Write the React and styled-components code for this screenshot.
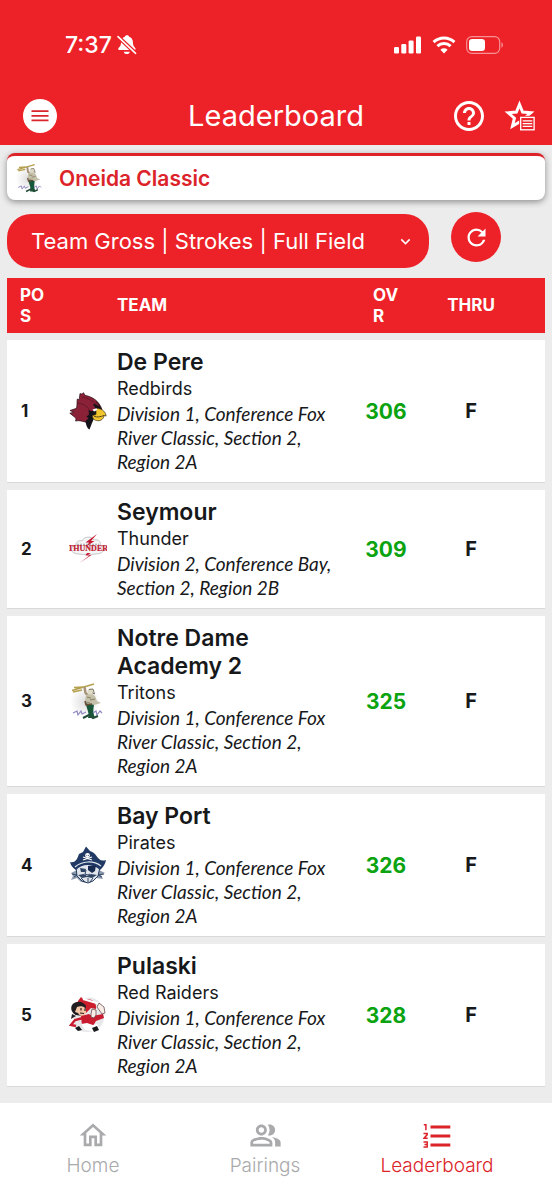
import React from 'react';
import styled, { createGlobalStyle } from 'styled-components';
import {
  MdExpandMore,
  MdHelpOutline,
  MdOutlineHome,
  MdOutlinePeopleAlt,
  MdRefresh,
} from 'react-icons/md';

const GlobalStyle = createGlobalStyle`
  * {
    box-sizing: border-box;
  }

  body {
    margin: 0;
    background: #ececec;
    color: #17181a;
    font-family: Inter, 'Liberation Sans', sans-serif;
  }

  button,
  select {
    font-family: inherit;
    border: 0;
    padding: 0;
    margin: 0;
  }
`;

const Page = styled.div`
  display: flex;
  flex-direction: column;
  min-height: 100vh;
`;

const Header = styled.header`
  background: #ed2228;
  color: #fff;
  padding-bottom: 3px;
`;

const StatusBar = styled.div`
  display: flex;
  align-items: center;
  justify-content: space-between;
  height: 90px;
  padding: 0 48px 0 65px;
`;

const StatusGroup = styled.div`
  display: flex;
  align-items: center;
  gap: ${({ $gap }) => $gap}px;
  font-size: 23px;
  font-weight: 500;

  svg {
    display: block;
  }
`;

const Toolbar = styled.div`
  display: grid;
  grid-template-columns: 1fr auto 1fr;
  align-items: center;
  height: 52px;
  padding: 0 16px;

  h1 {
    margin: 0;
    font-size: 29px;
    font-weight: 400;
    line-height: 36px;
  }
`;

const MenuButton = styled.button`
  display: flex;
  align-items: center;
  justify-content: center;
  justify-self: start;
  width: 34px;
  height: 34px;
  border-radius: 50%;
  background: #fff;
  color: #d9262d;
`;

const ToolbarStart = styled.div`
  display: flex;
  padding-left: 7px;
`;

const ToolbarActions = styled.div`
  display: flex;
  align-items: center;
  justify-content: flex-end;
  gap: 17px;
`;

const IconButton = styled.button`
  display: flex;
  background: none;
  color: #fff;
`;

const Main = styled.main`
  flex: 1;
  padding: 8px 7px 9px;
`;

const EventCard = styled.section`
  display: flex;
  align-items: center;
  gap: 14px;
  height: 47px;
  padding: 0 8px;
  background: #fff;
  border-top: 3px solid #dd2329;
  border-radius: 8px;
  box-shadow: 0 2px 6px rgba(0, 0, 0, 0.4);

  h2 {
    margin: 0;
    color: #dc2329;
    font-size: 21px;
    font-weight: 600;
  }
`;

const Filters = styled.div`
  display: flex;
  align-items: flex-start;
  gap: 22px;
  height: 56px;
  margin: 12px 44px 10px 0;
`;

const SelectBox = styled.div`
  position: relative;
  flex: 1;
  align-self: flex-end;

  select {
    display: block;
    width: 100%;
    height: 54px;
    padding: 0 48px 0 24px;
    appearance: none;
    background: #ed2228;
    border-radius: 24px;
    color: #fff;
    font-size: 22px;
  }

  svg {
    position: absolute;
    top: 18px;
    right: 14px;
    pointer-events: none;
    color: #fff;
  }
`;

const RefreshButton = styled.button`
  display: flex;
  align-items: center;
  justify-content: center;
  width: 50px;
  height: 50px;
  border-radius: 50%;
  background: #ed2228;
  color: #fff;
`;

const Table = styled.table`
  width: 100%;
  table-layout: fixed;
  border-collapse: separate;
  border-spacing: 0 7px;
  margin: -7px 0;
`;

const Column = styled.col`
  width: ${({ $width }) => $width}px;
`;

const HeadCell = styled.th`
  height: 55px;
  padding: ${({ $padding }) => $padding || '0'};
  background: #ed2228;
  color: #fff;
  font-size: 17px;
  font-weight: 700;
  line-height: 21px;
  text-align: ${({ $align }) => $align || 'left'};
  word-break: break-all;
`;

const Cell = styled.td`
  padding: ${({ $padding }) => $padding || '0'};
  background: #fff;
  border-bottom: 1px solid #d9d9d9;
  text-align: ${({ $align }) => $align || 'left'};
  vertical-align: middle;

  svg {
    display: block;
  }
`;

const Position = styled(Cell)`
  font-size: 17px;
  font-weight: 700;
`;

const Score = styled(Cell)`
  color: #0ba30f;
  font-size: 21px;
  font-weight: 700;
`;

const Thru = styled(Cell)`
  font-size: 20px;
  font-weight: 700;
`;

const TeamName = styled.h3`
  margin: 0;
  font-size: 23px;
  font-weight: 600;
  line-height: 28px;
`;

const Mascot = styled.p`
  margin: 0;
  font-size: 18px;
  line-height: 26px;
`;

const Details = styled.p`
  margin: 0;
  font-family: Lato, 'Open Sans', sans-serif;
  font-size: 19px;
  font-style: italic;
  line-height: 24px;
`;

const TabBar = styled.nav`
  display: grid;
  grid-template-columns: repeat(3, 1fr);
  height: 97px;
  padding: 16px 29px 0 7px;
  background: #fff;
`;

const Tab = styled.a`
  display: flex;
  flex-direction: column;
  align-items: center;
  color: ${({ $active }) => ($active ? '#dc2329' : '#a9aaac')};
  font-size: 19px;
  font-weight: 300;
  line-height: 28px;
  text-decoration: none;

  svg {
    display: block;
    height: 33px;
  }
`;

function BellOffIcon() {
  return (
    <svg width="20" height="20" viewBox="0 0 20 20" fill="#fff" aria-hidden="true">
      <path d="M10 .3c1.200 0 1.900.6 2.100 1.400 2.500.8 3.700 2.900 3.800 5.400.1 3.300.8 4.500 2.300 5.900.8.8.5 2-.7 2H2.300c-1.200 0-1.500-1.200-.7-2 1.600-1.400 2.400-2.600 2.500-5.900.1-2.500 1.300-4.600 3.800-5.400C8.100.9 8.800.3 10 .3Z" />
      <path d="M6.800 16.700h6c-.3 1.500-1.300 2.400-3 2.400s-2.700-.9-3-2.400Z" />
      <path d="M-.5.200 19.600 19.200" stroke="#ed2228" strokeWidth="4" />
      <path d="M1 1.600 18.600 18.300" stroke="#fff" strokeWidth="1.600" strokeLinecap="round" />
    </svg>
  );
}

function SignalIcon() {
  return (
    <svg width="28" height="18" viewBox="0 0 28 18" fill="#fff" aria-hidden="true">
      <rect x="0" y="11" width="5" height="6.500" rx="1.300" />
      <rect x="7.300" y="8" width="5" height="9.500" rx="1.300" />
      <rect x="14.600" y="4.500" width="5" height="13" rx="1.300" />
      <rect x="22" y=".5" width="5" height="17" rx="1.300" />
    </svg>
  );
}

function WifiIcon() {
  return (
    <svg width="24" height="18" viewBox="0 0 24 18" fill="none" stroke="#fff" aria-hidden="true">
      <path d="M1.600 6.200a15 15 0 0 1 20.800 0" strokeWidth="3" />
      <path d="M5.400 10.200a9.600 9.600 0 0 1 13.200 0" strokeWidth="3" />
      <path d="m8.400 13.800 3.600 3.700 3.600-3.700a5.200 5.200 0 0 0-7.200 0Z" fill="#fff" stroke="none" />
    </svg>
  );
}

function BatteryIcon() {
  return (
    <svg width="38" height="18" viewBox="0 0 38 18" fill="none" aria-hidden="true">
      <rect x=".7" y=".7" width="33" height="16.600" rx="5" stroke="#fff" strokeOpacity=".5" strokeWidth="1.200" />
      <rect x="3" y="3" width="16" height="12" rx="3.200" fill="#fff" />
      <path d="M35.500 6.300c1.700.6 1.700 4.800 0 5.400Z" fill="#fff" fillOpacity=".6" />
    </svg>
  );
}

function MenuIcon() {
  return (
    <svg width="18" height="12" viewBox="0 0 18 12" stroke="currentColor" strokeWidth="1.700" aria-hidden="true">
      <path d="M.5 1.200h17M.5 5.800h17M.5 10.400h17" />
    </svg>
  );
}

function StarListIcon() {
  return (
    <svg width="32" height="32" viewBox="0 0 32 32" fill="none" aria-hidden="true">
      <path
        d="m15.500 4.500 3.100 7.600 8.200.7-6.200 5.400 1.900 8-7-4.200-7 4.200 1.900-8-6.200-5.400 8.200-.7Z"
        stroke="#fff"
        strokeWidth="3"
      />
      <rect x="15.200" y="15.800" width="16" height="15.200" fill="#ed2228" />
      <rect x="16.700" y="17.400" width="13.400" height="12.400" stroke="#fff" strokeWidth="1.300" />
      <path d="M18.700 20.800h9.600M18.700 23.600h9.600M18.700 26.400h9.600" stroke="#fff" strokeWidth="1.300" />
    </svg>
  );
}

function NumberedListIcon() {
  return (
    <svg width="28" height="33" viewBox="0 0 28 33" fill="none" stroke="currentColor" aria-hidden="true">
      <path d="M7.500 11h19.800M7.500 20h19.800M7.500 29h19.800" strokeWidth="3" transform="translate(0 -3)" />
      <path
        d="M.8 5.800h2.100v5.400M.5 14.400h3.700v1.200L1 19.300h3.700M.5 23.100h3.700v5H.5M1.500 25.600h2.700"
        strokeWidth="1.500"
      />
    </svg>
  );
}

function RedbirdLogo() {
  return (
    <svg width="38" height="38" viewBox="0 0 38 38" aria-hidden="true">
      <path
        d="M11 1.500c1.200.9 2.200.4 3.500-.8l1.500 2.600c8 1.800 14 5.700 17 14.200l-5 3-6 8-4 2c-4-1-7-2.500-11.500-1.500.8-2 .5-3-1-4L.8 21.200l4-1L1 18.500l6.500-2.200c.8-3 .3-7 .8-9.300l1.900.8Z"
        fill="#8a2136"
        stroke="#2a1118"
        strokeWidth=".7"
      />
      <path d="M24 12c4 0 8 2 9 6l-5 2-5 11-2.500 6.500c-2.500-1-3.500-5-4-8.500l3-2.500-2-2 2.500-2-.5-5c3 2.500 5.500 2 7-1Z" fill="#15131a" />
      <path
        d="M27 16.500c4-.5 9 1.500 10.200 7.500l-2.200-.5c0 3-3 5.500-6.200 5.200-3.300 0-5.600-2.400-5.300-5.200l3.500-1Z"
        fill="#f1c62c"
        stroke="#403014"
        strokeWidth=".7"
      />
      <path d="m23.500 17.500 4-1.200 1 1.800-3.500 1.300Z" fill="#fff" />
      <path d="M25 24.200c3 1.400 6.500.7 10-.7" stroke="#59451b" fill="none" />
      <path d="M13 5c7 1.500 13 5 16 9M9 11c5 1 9 3 11 6" stroke="#651a2c" fill="none" />
      <path d="M27 9.500c3 2 4 5 4.500 7.500" stroke="#2a1118" fill="none" />
    </svg>
  );
}

function ThunderLogo() {
  return (
    <svg width="38" height="38" viewBox="0 0 38 38" aria-hidden="true">
      <path
        d="M7 15c0-4 4-5 6-4 2-5 10-5 12-1 5-1 7 2 6 5 5 1 5 6 1 8-6 2-22 2-27 0-4-2-3-7 2-8Z"
        fill="#f5f5f6"
        stroke="#c8c8cb"
      />
      <path d="M8 14.500h22" stroke="#b5b5ba" strokeWidth="1.600" strokeDasharray="2 1" />
      <path d="M28 4 16.500 12.500h3.500L18 16l7.500-5h-3.500Z" fill="#c71931" />
      <path d="m18 23-1.500 2.500h4L10.500 33 22.500 25h-3.500l2.500-2Z" fill="#c71931" />
      <text
        x="19"
        y="21"
        textAnchor="middle"
        fontFamily="Liberation Serif, serif"
        fontSize="8"
        fontWeight="700"
        fill="#bd1830"
        stroke="#bd1830"
        strokeWidth=".2"
      >
        THUNDER
      </text>
    </svg>
  );
}

function TritonLogo({ size = 38 }) {
  return (
    <svg width={size} height={size} viewBox="0 0 38 38" aria-hidden="true">
      <defs>
        <radialGradient id="mist">
          <stop offset="0" stopColor="#dededf" />
          <stop offset="1" stopColor="#fff" />
        </radialGradient>
      </defs>
      <ellipse cx="16" cy="20" rx="15" ry="16" fill="url(#mist)" />
      <path d="M3 8.500 25 2M5 5.500l9-.5M4 10l9-2" stroke="#b5a14d" strokeWidth="1.700" />
      <path d="m15.500 5 1 6 4 4" stroke="#a6937a" strokeWidth="2.500" fill="none" />
      <path d="m17 13 5-2 4 3 2 5 4 2-7 2-6-1-3-4Z" fill="#c4c0a9" />
      <circle cx="21.500" cy="9.500" r="3" fill="#dedbc8" />
      <path d="m20 7.500 4-.5 1.500 5-2-1" stroke="#7d7563" fill="none" />
      <path d="m18 15 4 1m-1 2 5-1m-9 3 4 1" stroke="#8b8063" fill="none" />
      <path d="M17 21c3 2 6 1 8 2-1 5-1 8 1 13h-7c2-6-2-9-2-15Z" fill="#17583a" />
      <path d="m16 19 1 4 6-1" stroke="#684c35" strokeWidth="1.500" fill="none" />
      <path d="m4 31 4-2 1 4 3-4 1 3 4-2m7 1 3-2 1 4 3-4 2 2" stroke="#8d89c2" strokeWidth="1.200" fill="none" />
      <path d="m14 36 6-3 4 3 5-2" stroke="#244d3a" strokeWidth="2" fill="none" />
    </svg>
  );
}

function PirateLogo() {
  return (
    <svg width="38" height="38" viewBox="0 0 38 38" aria-hidden="true">
      <path d="m2 27 6-3 22 0 6 3-4 2 2 4-7-1-7 5-8-1-4-4-6 2 2-4Z" fill="#8c98ac" />
      <path d="M7 21c8-5 18-5 24 0l-2 9-5 5-5 2-6-2-5-5Z" fill="#e1e5eb" stroke="#263c60" />
      <path
        d="M1 16c5 1 7-2 9-8l4-2 3-5.500L21 5c8 2 7 12 16 9-1 5-3 7-6 10-7-6-17-7-24 0-3-2-5-4-6-8Z"
        fill="#213a65"
      />
      <path d="M6 21c7-6 18-7 26-1" stroke="#dfe4eb" strokeWidth="1.200" fill="none" />
      <path d="m14 14 9-3m-9 0 9 3" stroke="#fff" strokeWidth="1.200" />
      <circle cx="18.500" cy="9.500" r="2.400" fill="#fff" />
      <path d="M17.500 9.500h.7m1 0h.7" stroke="#213a65" />
      <path d="m11 22 6 1-1 3h-4Z" fill="#304665" />
      <path d="m19 20 8-1-1 6-3 2-4-3Z" fill="#172c50" />
      <path d="m17 24-1 4 3 1 2-1" stroke="#304665" fill="none" />
      <path d="m9 29 6-1 3 2 4-2 6 1-5 3-5-1-5 1Z" fill="#304665" />
      <path d="m12 32 4 4m3-4v4m5-4-3 4M3 28l5 1-3 2m30-3-6 1 4 2" stroke="#304665" fill="none" />
    </svg>
  );
}

function RaiderLogo() {
  return (
    <svg width="38" height="38" viewBox="0 0 38 38" aria-hidden="true">
      <path d="M16 2C28-1 36 9 35 22c-1 9-8 14-17 14C9 36 4 30 5 21Z" fill="#e8e8eb" />
      <path d="m9 5 3-4 3 3c9-3 13 4 12 9l-5-1-5 5L8 9Z" fill="#cb1d2c" />
      <path d="m14 3 17 5" stroke="#fff" strokeWidth="2" />
      <path d="M3 9c4-5 11-4 14 1l-1 6-3 4-6-1C3 17 1 13 3 9Z" fill="#211d20" />
      <path d="M8 11c6-2 10 1 9 6-2 4-6 4-8 0l-3-1Z" fill="#f4c7a9" />
      <path d="M12 12v2.500m4-2v2.500m-5 2 4 .5" stroke="#30191a" strokeWidth="1.200" fill="none" />
      <path d="m12 20 8-2 3 2 11-2 1 4-8 3-3 5H13Z" fill="#c91c2e" />
      <path d="m22 18 1-5 4 1v5l-2 3-3-1Zm6-7 2-4 5 4 1 6-3 1Z" fill="#f7eee8" stroke="#5c3639" strokeWidth=".7" />
      <path d="m14 22-8 2-4 5 5 1" stroke="#c91c2e" strokeWidth="2.500" fill="none" />
      <path d="m12 28 6-1 6 2 4-1 3 5-7 2-8-1Z" fill="#fff" />
      <path d="m6 32 4-2 3 4-4 1Zm17 0 5-2 2 4-5 2Z" fill="#19191c" />
      <path d="m3 18 4 2-5 3Z" fill="#232125" />
    </svg>
  );
}

const teams = [
  {
    name: 'De Pere',
    mascot: 'Redbirds',
    details: 'Division 1, Conference Fox River Classic, Section 2, Region 2A',
    score: 306,
    Logo: RedbirdLogo,
  },
  {
    name: 'Seymour',
    mascot: 'Thunder',
    details: 'Division 2, Conference Bay, Section 2, Region 2B',
    score: 309,
    Logo: ThunderLogo,
  },
  {
    name: 'Notre Dame Academy 2',
    mascot: 'Tritons',
    details: 'Division 1, Conference Fox River Classic, Section 2, Region 2A',
    score: 325,
    Logo: TritonLogo,
  },
  {
    name: 'Bay Port',
    mascot: 'Pirates',
    details: 'Division 1, Conference Fox River Classic, Section 2, Region 2A',
    score: 326,
    Logo: PirateLogo,
  },
  {
    name: 'Pulaski',
    mascot: 'Red Raiders',
    details: 'Division 1, Conference Fox River Classic, Section 2, Region 2A',
    score: 328,
    Logo: RaiderLogo,
  },
];

function Leaderboard() {
  return (
    <Table>
      <colgroup>
        <Column $width={62} />
        <Column $width={48} />
        <col />
        <Column $width={54} />
        <Column $width={132} />
      </colgroup>
      <thead>
        <tr>
          <HeadCell $padding="0 20px 0 13px">POS</HeadCell>
          <HeadCell aria-label="Logo" />
          <HeadCell>TEAM</HeadCell>
          <HeadCell $padding="0 10px 0 14px">OVR</HeadCell>
          <HeadCell $align="center" $padding="0 16px 0 0">
            THRU
          </HeadCell>
        </tr>
      </thead>
      <tbody>
        {teams.map(({ name, mascot, details, score, Logo }, index) => (
          <tr key={name}>
            <Position $padding="0 0 0 14px">{index + 1}</Position>
            <Cell>
              <Logo />
            </Cell>
            <Cell $padding="8px 22px 8px 0">
              <TeamName>{name}</TeamName>
              <Mascot>{mascot}</Mascot>
              <Details>{details}</Details>
            </Cell>
            <Score $align="center">{score}</Score>
            <Thru $align="center" $padding="0 16px 0 0">
              F
            </Thru>
          </tr>
        ))}
      </tbody>
    </Table>
  );
}

function App() {
  return (
    <Page>
      <GlobalStyle />
      <Header>
        <StatusBar>
          <StatusGroup $gap={5}>
            <span>7:37</span>
            <BellOffIcon />
          </StatusGroup>
          <StatusGroup $gap={10}>
            <SignalIcon />
            <WifiIcon />
            <BatteryIcon />
          </StatusGroup>
        </StatusBar>
        <Toolbar>
          <ToolbarStart>
            <MenuButton aria-label="Menu">
              <MenuIcon />
            </MenuButton>
          </ToolbarStart>
          <h1>Leaderboard</h1>
          <ToolbarActions>
            <IconButton aria-label="Help">
              <MdHelpOutline size={36} />
            </IconButton>
            <IconButton aria-label="Favorites">
              <StarListIcon />
            </IconButton>
          </ToolbarActions>
        </Toolbar>
      </Header>
      <Main>
        <EventCard>
          <TritonLogo size={30} />
          <h2>Oneida Classic</h2>
        </EventCard>
        <Filters>
          <SelectBox>
            <select aria-label="Leaderboard view" defaultValue="team-gross">
              <option value="team-gross">Team Gross | Strokes | Full Field</option>
            </select>
            <MdExpandMore size={19} />
          </SelectBox>
          <RefreshButton aria-label="Refresh">
            <MdRefresh size={27} />
          </RefreshButton>
        </Filters>
        <Leaderboard />
      </Main>
      <TabBar>
        <Tab href="#home">
          <MdOutlineHome size={32} />
          Home
        </Tab>
        <Tab href="#pairings">
          <MdOutlinePeopleAlt size={33} />
          Pairings
        </Tab>
        <Tab href="#leaderboard" $active>
          <NumberedListIcon />
          Leaderboard
        </Tab>
      </TabBar>
    </Page>
  );
}

export default App;
